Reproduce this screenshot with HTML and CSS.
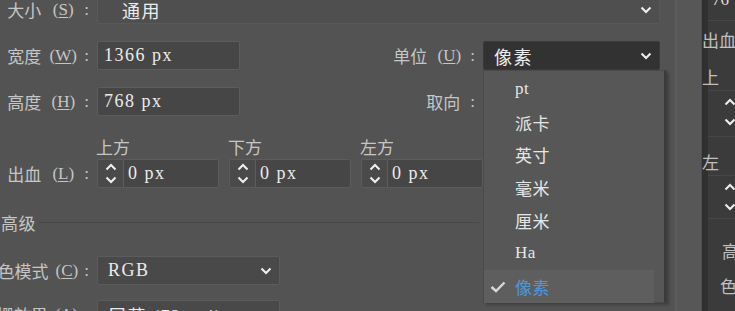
FILE: index.html
```html
<!DOCTYPE html>
<html lang="zh-CN">
<head>
<meta charset="utf-8">
<link rel="stylesheet" href="styles.css">
</head>
<body>
<div class="screen">
  <div class="main">
    <div class="row r1">
      <div class="lbl">大小<span class="key">(<u>S</u>)</span>:</div>
      <div class="field sel sel-wide"><span>通用</span>
        <svg class="chev" width="12" height="8" viewBox="0 0 12 8"><path d="M1.5 1.5 L6 6 L10.5 1.5"/></svg></div>
    </div>
    <div class="row r2">
      <div class="lbl">宽度<span class="key">(<u>W</u>)</span>:</div>
      <div class="field inp">1366 px</div>
      <div class="lbl lbl-unit">单位<span class="key">(<u>U</u>)</span>:</div>
      <div class="field sel sel-unit"><span>像素</span>
        <svg class="chev" width="12" height="8" viewBox="0 0 12 8"><path d="M1.5 1.5 L6 6 L10.5 1.5"/></svg></div>
    </div>
    <div class="row r3">
      <div class="lbl">高度<span class="key">(<u>H</u>)</span>:</div>
      <div class="field inp">768 px</div>
      <div class="lbl lbl-orient">取向<span class="gap"></span>:</div>
    </div>
    <div class="bleed">
      <div class="lbl">出血<span class="key">(<u>L</u>)</span>:</div>
      <div class="spins">
        <div class="spin-col"><div class="cap">上方</div>
          <div class="field spin"><div class="arrows">
            <svg width="12" height="8" viewBox="0 0 12 8"><path d="M1.5 6.5 L6 2 L10.5 6.5"/></svg>
            <svg width="12" height="8" viewBox="0 0 12 8"><path d="M1.5 1.5 L6 6 L10.5 1.5"/></svg>
          </div><div class="val">0 px</div></div></div>
        <div class="spin-col"><div class="cap">下方</div>
          <div class="field spin"><div class="arrows">
            <svg width="12" height="8" viewBox="0 0 12 8"><path d="M1.5 6.5 L6 2 L10.5 6.5"/></svg>
            <svg width="12" height="8" viewBox="0 0 12 8"><path d="M1.5 1.5 L6 6 L10.5 1.5"/></svg>
          </div><div class="val">0 px</div></div></div>
        <div class="spin-col"><div class="cap">左方</div>
          <div class="field spin"><div class="arrows">
            <svg width="12" height="8" viewBox="0 0 12 8"><path d="M1.5 6.5 L6 2 L10.5 6.5"/></svg>
            <svg width="12" height="8" viewBox="0 0 12 8"><path d="M1.5 1.5 L6 6 L10.5 1.5"/></svg>
          </div><div class="val">0 px</div></div></div>
      </div>
    </div>
    <div class="section"><span>高级</span><div class="rule"></div></div>
    <div class="row r5">
      <div class="lbl">颜色模式<span class="key">(<u>C</u>)</span>:</div>
      <div class="field sel sel-mode"><span>RGB</span>
        <svg class="chev" width="12" height="8" viewBox="0 0 12 8"><path d="M1.5 1.5 L6 6 L10.5 1.5"/></svg></div>
    </div>
    <div class="row r6">
      <div class="lbl">光栅效果<span class="key">(<u>A</u>)</span>:</div>
      <div class="field sel sel-mode"><span>屏幕 (72 ppi)</span></div>
    </div>
  </div>
  <div class="strip"></div>
  <div class="back">
    <div class="b-item b-top">76</div>
    <div class="b-item b-bleed">出血</div>
    <div class="b-item b-up">上</div>
    <div class="b-arrows">
      <svg width="12" height="8" viewBox="0 0 12 8"><path d="M1.5 6.5 L6 2 L10.5 6.5"/></svg>
      <svg width="12" height="8" viewBox="0 0 12 8"><path d="M1.5 1.5 L6 6 L10.5 1.5"/></svg>
    </div>
    <div class="b-item b-left">左</div>
    <div class="b-arrows b-arrows2">
      <svg width="12" height="8" viewBox="0 0 12 8"><path d="M1.5 6.5 L6 2 L10.5 6.5"/></svg>
      <svg width="12" height="8" viewBox="0 0 12 8"><path d="M1.5 1.5 L6 6 L10.5 1.5"/></svg>
    </div>
    <div class="b-item b-high">高</div>
    <div class="b-item b-color">色</div>
  </div>
  <ul class="menu">
    <li>pt</li>
    <li>派卡</li>
    <li>英寸</li>
    <li>毫米</li>
    <li>厘米</li>
    <li>Ha</li>
    <li class="on"><svg class="check" width="16" height="12" viewBox="0 0 16 12"><path d="M1.5 6 L6 10 L14.5 1.5"/></svg>像素</li>
  </ul>
</div>
</body>
</html>
```
FILE: styles.css
```css
* { box-sizing: border-box; }
html, body { margin: 0; padding: 0; }
body {
  width: 735px;
  height: 311px;
  overflow: hidden;
  background: #535353;
  font-family: "Liberation Serif", "Noto Sans CJK SC", serif;
  font-size: 17px;
  color: #c6c6c6;
}
.screen {
  position: relative;
  width: 735px;
  height: 311px;
  display: flex;
  overflow: hidden;
}
.main {
  width: 675px;
  flex: none;
  display: flex;
  flex-direction: column;
}
.row {
  display: flex;
  align-items: center;
  height: 29px;
}
.lbl {
  width: 89px;
  flex: none;
  display: flex;
  align-items: center;
  justify-content: flex-end;
  white-space: nowrap;
  margin-right: 8px;
}
.key {
  display: inline-block;
  width: 30px;
  margin: 0 6px 0 7px;
  text-align: center;
}
.gap { display: inline-block; width: 10px; }
.key u { text-underline-offset: 2px; }
.field {
  height: 29px;
  border: 1px solid #5c5c5c;
  border-radius: 2px;
  background: #464646;
  color: #ececec;
  display: flex;
  align-items: center;
  padding-left: 6px;
  white-space: nowrap;
  letter-spacing: 1.5px;
  font-size: 18px;
}
.sel { justify-content: space-between; padding-right: 7px; }
.chev path, .arrows path, .b-arrows path {
  fill: none;
  stroke: #f0f0f0;
  stroke-width: 2;
}
.r1 { margin-top: -5px; height: 29px; }
.sel-wide { width: 563px; height: 29px; background: #4f4f4f; border-color: #595959; padding-left: 24px; }
.r2 { margin-top: 17px; }
.r3 { margin-top: 17px; }
.inp { width: 143px; }
.lbl-unit { margin-left: 149px; width: 86px; }
.sel-unit {
  width: 177px;
  background: #323232;
  border-color: #3a3a3a;
  padding-left: 10px;
}
.lbl-orient { margin-left: 149px; width: 86px; }
.bleed {
  display: flex;
  align-items: flex-end;
  margin-top: 24px;
}
.bleed .lbl { height: 29px; }
.spins { display: flex; gap: 10px; }
.spin-col { display: flex; flex-direction: column; width: 122px; }
.cap { height: 19px; line-height: 18px; margin-left: -1px; }
.spin { width: 122px; padding-left: 0; }
.arrows {
  width: 26px;
  height: 100%;
  border-right: 1px solid #5c5c5c;
  display: flex;
  flex-direction: column;
  align-items: center;
  justify-content: center;
  gap: 5px;
  background: #4a4a4a;
}
.val { padding-left: 4px; }
.section {
  display: flex;
  align-items: center;
  height: 20px;
  margin-top: 24px;
  padding-left: 1px;
  letter-spacing: 0.5px;
}
.rule { flex: none; width: 440px; height: 1px; background: #484848; margin-left: 3px; }
.r5 { margin-top: 24px; }
.sel-mode { width: 183px; padding-left: 10px; background: #494949; }
.r6 { margin-top: 15px; }
.strip {
  width: 27px;
  flex: none;
  background: #575757;
  border-left: 2px solid #5c5c5c;
  border-right: 1px solid #4d4d4d;
}
.back {
  flex: 1;
  position: relative;
  background: #3b3b3b;
  border-left: 6px solid #303030;
  color: #c0c0c0;
}
.b-item { position: absolute; white-space: nowrap; }
.b-top { top: -10px; left: 4px; color: #ddd; }
.b-bleed { top: 27px; left: -6px; }
.b-up { top: 64px; left: -6px; }
.b-left { top: 149px; left: -6px; }
.b-high { top: 238px; left: 14px; }
.b-color { top: 273px; left: 12px; }
.b-arrows {
  position: absolute;
  left: 16px;
  top: 98px;
  display: flex;
  flex-direction: column;
  gap: 12px;
}
.b-arrows2 { top: 183px; }
.back::before {
  content: "";
  position: absolute;
  left: 0; right: 0; top: 20px;
  height: 1px; background: #464646;
  box-shadow: 0 70px 0 #464646, 0 116px 0 #464646, 0 155px 0 #464646, 0 198px 0 #464646;
}
.menu {
  position: absolute;
  left: 483px;
  top: 70px;
  width: 183px;
  height: 233px;
  margin: 0;
  padding: 2px 0 0 0;
  list-style: none;
  background: #575757;
  border: 1px solid #4b4b4b;
  border-right: 2px solid #3a3a3a;
  color: #e6e6e6;
  box-shadow: 3px 2px 3px rgba(0,0,0,0.25);
}
.menu li {
  height: 32.8px;
  display: flex;
  align-items: center;
  padding-left: 31px;
  position: relative;
  letter-spacing: 0.5px;
}
.menu li.on {
  background: #5e5e5e;
  color: #4b97df;
  margin-right: 10px;
}
.check {
  position: absolute;
  left: 6px;
  top: 11px;
}
.check path { fill: none; stroke: #d8d8d8; stroke-width: 2.4; }
```
